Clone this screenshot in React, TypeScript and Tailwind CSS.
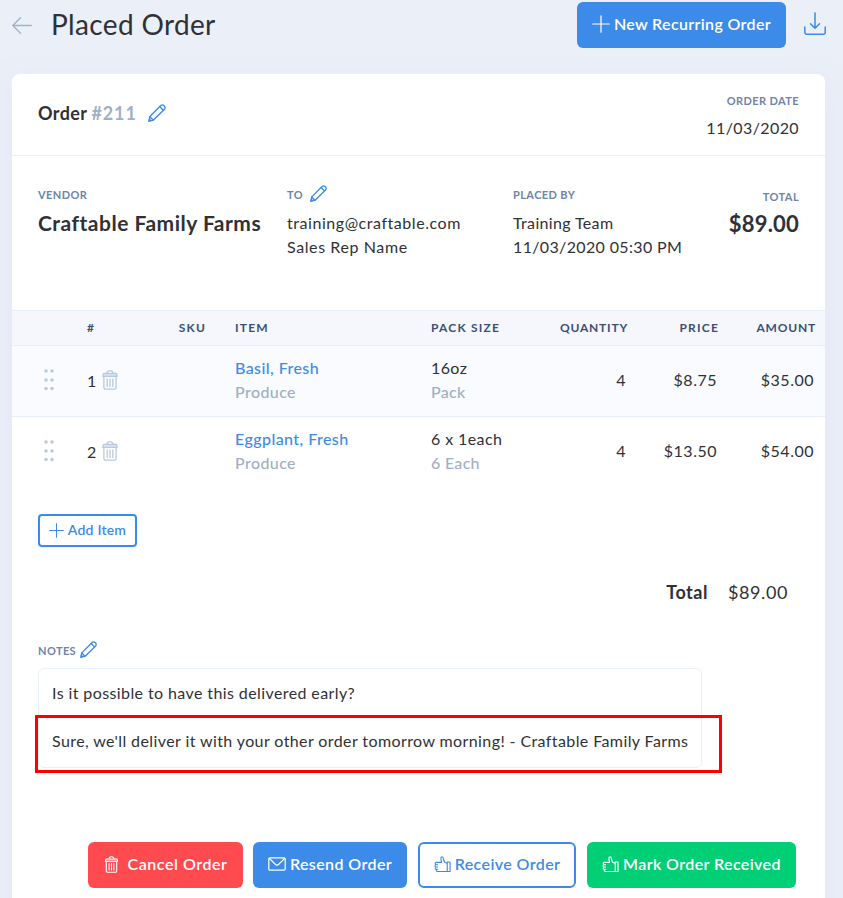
import type { ReactNode } from 'react';

type IconProps = { className?: string };

function PencilIcon({ className }: IconProps) {
  return (
    <svg viewBox="0 0 18 18" fill="none" stroke="currentColor" strokeWidth="1.4" strokeLinecap="round" strokeLinejoin="round" className={className}>
      <path d="M5.4 16.1.8 17.2l1.1-4.6L12.8 1.5a2.1 2.1 0 0 1 3 0l.7.7a2.1 2.1 0 0 1 0 3z" />
      <path d="m11.8 2.7 3.5 3.5M1.900 12.800l3.300 3.300M1.500 15.400l1.100 1.100" />
    </svg>
  );
}

function TrashIcon({ className }: IconProps) {
  return (
    <svg viewBox="0 0 16 20" fill="none" stroke="currentColor" strokeWidth="1.3" strokeLinecap="round" strokeLinejoin="round" className={className}>
      <path d="M1.9 6.4h12.2v11.2a1.6 1.6 0 0 1-1.6 1.6h-9a1.6 1.6 0 0 1-1.6-1.6z" />
      <path d="M1.5 3.5h13l.7 2.9H.8z" fill="currentColor" fillOpacity=".35" />
      <path d="M4.900 3.400c.3-1.600 1.100-2.500 2.300-2.500h1.600c1.200 0 2 .9 2.300 2.500M5.200 8.900v7.600M8 8.900v7.600M10.800 8.900v7.600" />
    </svg>
  );
}

function PlusIcon({ className }: IconProps) {
  return (
    <svg viewBox="0 0 18 18" fill="none" stroke="currentColor" strokeWidth="1.2" strokeLinecap="round" className={className}>
      <path d="M9 .75v16.5M.75 9h16.5" />
    </svg>
  );
}

function MailIcon({ className }: IconProps) {
  return (
    <svg viewBox="0 0 18 14" fill="none" stroke="currentColor" strokeWidth="1.2" strokeLinejoin="round" className={className}>
      <rect x=".8" y=".8" width="16.4" height="12.4" rx="1.2" />
      <path d="m1.2 1.3 6.3 6.2a2.1 2.1 0 0 0 3 0l6.3-6.2" />
    </svg>
  );
}

function ThumbIcon({ className }: IconProps) {
  return (
    <svg viewBox="0 0 18 18" fill="none" stroke="currentColor" strokeWidth="1.2" strokeLinecap="round" strokeLinejoin="round" className={className}>
      <path d="M14 8.200c-2.200-.4-3.600-2.100-3.900-4.100-.2-1.500-.5-2.800-1.500-2.800-1 0-1.400 1-1.200 2.200l.5 3.800H2.500a1.200 1.200 0 0 0 0 2.500h1.300M2.300 9.800a1.200 1.200 0 0 0 0 2.400h1.500M2.500 12.200a1.200 1.200 0 0 0 0 2.400h1.300M3.200 14.600a1.200 1.200 0 0 0 .2 2.300H14" />
      <path d="M14 6.900h3v10h-3z" />
    </svg>
  );
}

function DragIcon() {
  return (
    <svg viewBox="0 0 10 22" className="h-[22px] w-2.5 text-[#b9c9dd]" fill="currentColor">
      {[2, 11, 19.5].map((y) => (
        <g key={y}>
          <circle cx="2" cy={y} r="1.7" />
          <circle cx="8" cy={y} r="1.7" />
        </g>
      ))}
    </svg>
  );
}

const items = [
  { id: 1, name: 'Basil, Fresh', category: 'Produce', pack: '16oz', unit: 'Pack', quantity: 4, price: '$8.75', amount: '$35.00', row: 'h-[71px] bg-[#f9fbfe] border-b border-[#e7eef6]' },
  { id: 2, name: 'Eggplant, Fresh', category: 'Produce', pack: '6 x 1each', unit: '6 Each', quantity: 4, price: '$13.50', amount: '$54.00', row: 'h-[70px]' },
];

const columns = 'grid grid-cols-[75px_60px_88px_196px_109px_88px_91px_97px] items-center';

function Label({ children, className = '' }: { children: ReactNode; className?: string }) {
  return <div className={`text-[11px] leading-4 font-bold tracking-[0.4px] whitespace-nowrap text-[#6e84a8] uppercase ${className}`}>{children}</div>;
}

export default function App() {
  return (
    <div className="h-[898px] w-full overflow-hidden bg-[#ebeff8] font-['Lato','Liberation_Sans',sans-serif] text-base leading-6 tracking-[0.5px] text-[#2f3136]">
      <header className="flex h-[74px] items-start pt-0.5 pr-[17px] pl-3">
        <svg viewBox="0 0 20 17" className="mt-[15px] h-[17px] w-5 text-[#9fb3c8]" fill="none" stroke="currentColor" strokeWidth="1.3" strokeLinecap="round" strokeLinejoin="round">
          <path d="M19.3 8.5H.8M8.5.8.8 8.5l7.7 7.7" />
        </svg>
        <h1 className="ml-[19px] text-[28px] leading-[44px] tracking-[0.35px] whitespace-nowrap">Placed Order</h1>
        <button className="ml-auto flex h-[46px] w-[209px] items-center justify-center gap-1 rounded-md bg-[#3d8be8] font-semibold tracking-[0.35px] whitespace-nowrap text-white">
          <PlusIcon className="mb-0.5 h-[18px] w-[18px] shrink-0" />
          <span className="pb-0.5">New Recurring Order</span>
        </button>
        <button className="mt-2.5 ml-[18px] text-[#3d8be8]">
          <svg viewBox="0 0 22 23" className="h-[23px] w-[22px]" fill="none" stroke="currentColor" strokeWidth="1.5" strokeLinecap="round" strokeLinejoin="round">
            <path d="M11 1v15M6.5 11.7 11 16.2l4.5-4.5M.8 15v5.2a2 2 0 0 0 2 2h16.4a2 2 0 0 0 2-2V15" />
          </svg>
        </button>
      </header>

      <main className="mr-[18px] ml-3 h-[860px] rounded-lg bg-white shadow-[0_12px_24px_rgba(225,220,250,0.5)]">
        <div className="flex h-[82px] justify-between border-b border-[#e7eef6] px-[26px]">
          <div className="flex h-[78px] items-center text-lg font-bold tracking-[0.4px]">
            Order <span className="ml-1 tracking-[0.9px] text-[#9fb0c5]">#211</span>
            <PencilIcon className="ml-[11px] h-[18px] w-[18px] text-[#3d8be8]" />
          </div>
          <div className="pt-[19px] text-right">
            <Label>Order Date</Label>
            <div className="mt-[7px] tracking-[0.4px]">11/03/2020</div>
          </div>
        </div>

        <div className="flex h-[154px] px-[26px] pt-[31px] whitespace-nowrap">
          <div className="w-[249px]">
            <Label>Vendor</Label>
            <div className="mt-[7px] text-[21px] leading-[26px] font-bold tracking-[0.5px]">Craftable Family Farms</div>
          </div>
          <div className="w-[226px]">
            <div className="flex h-4 items-center">
              <Label>To</Label>
              <PencilIcon className="mb-1 ml-[7px] h-[17px] w-[17px] text-[#3d8be8]" />
            </div>
            <div className="mt-2 tracking-[0.55px]">training@craftable.com</div>
            <div className="tracking-[0.6px]">Sales Rep Name</div>
          </div>
          <div className="tracking-[0.35px]">
            <Label>Placed By</Label>
            <div className="mt-2">Training Team</div>
            <div>11/03/2020 05:30 PM</div>
          </div>
          <div className="ml-auto text-right">
            <Label className="pt-0.5">Total</Label>
            <div className="mt-1.5 text-[22px] leading-[26px] font-bold tracking-[0.2px]">$89.00</div>
          </div>
        </div>

        <div className={`${columns} h-9 border-y border-[#e7eef6] bg-[#f5f7fc] text-xs font-bold tracking-[1.2px] text-[#3c5077]`}>
          <div />
          <div>#</div>
          <div className="pr-[29px] text-right">SKU</div>
          <div>ITEM</div>
          <div>PACK SIZE</div>
          <div className="text-right tracking-[0.8px]">QUANTITY</div>
          <div className="text-right">PRICE</div>
          <div className="text-right tracking-[0.8px]">AMOUNT</div>
        </div>

        {items.map((item) => (
          <div key={item.id} className={`${columns} ${item.row}`}>
            <div className="pb-0.5 pl-8">
              <DragIcon />
            </div>
            <div className="flex items-center gap-[5px]">
              <span className="pb-px">{item.id}</span>
              <TrashIcon className="mb-0.5 h-5 w-4 text-[#b9c9dd]" />
            </div>
            <div />
            <div className="pb-[3px]">
              <div className="font-medium tracking-[0.43px] text-[#3d8be8]">{item.name}</div>
              <div className="font-medium tracking-[0.4px] text-[#9fb0c5]">{item.category}</div>
            </div>
            <div className="pb-[3px]">
              <div className="tracking-[0.4px]">{item.pack}</div>
              <div className="font-medium tracking-[0.3px] text-[#9fb0c5]">{item.unit}</div>
            </div>
            <div className="pr-0.5 pb-0.5 text-right">{item.quantity}</div>
            <div className="pr-0.5 pb-0.5 text-right">{item.price}</div>
            <div className="pr-0.5 pb-0.5 text-right">{item.amount}</div>
          </div>
        ))}

        <div className="px-[26px] pt-[27px]">
          <button className="flex h-[33px] w-[99px] items-center justify-center gap-1 rounded border-2 border-[#3d8be8] text-sm font-semibold tracking-[0.2px] whitespace-nowrap text-[#3d8be8]">
            <PlusIcon className="h-[15px] w-[15px] shrink-0" />
            <span className="pb-px">Add Item</span>
          </button>
        </div>

        <div className="mt-[33px] flex justify-end gap-5 pr-[37px] text-lg leading-6">
          <span className="font-bold">Total</span>
          <span className="tracking-[0.6px]">$89.00</span>
        </div>

        <div className="mt-[39px] flex h-4 items-center pl-[26px]">
          <Label>Notes</Label>
          <PencilIcon className="mb-1 ml-1 h-[17px] w-[17px] text-[#3d8be8]" />
        </div>

        <div className="relative mt-[9px] ml-[26px] h-[100px] w-[664px] rounded-md border border-[#e9eff7] px-[13px] py-3 tracking-[0.4px] whitespace-nowrap">
          <p>Is it possible to have this delivered early?</p>
          <p className="mt-6">Sure, we'll deliver it with your other order tomorrow morning! - Craftable Family Farms</p>
          <div className="absolute top-[46px] -left-1 h-[58px] w-[687px] border-3 border-[#fb0000]" />
        </div>

        <div className="mt-[74px] flex h-[46px] pl-[76px] font-semibold tracking-[0.4px] whitespace-nowrap">
          <button className="flex w-[155px] items-center justify-center gap-2 rounded-md bg-[#ff4b4f] text-white">
            <TrashIcon className="mb-0.5 h-[17px] w-[15px] shrink-0" />
            <span className="pb-0.5 pl-px tracking-[0.55px]">Cancel Order</span>
          </button>
          <button className="ml-2.5 flex w-[154px] items-center justify-center gap-1 rounded-md bg-[#3d8be8] text-white">
            <MailIcon className="mb-0.5 h-3.5 w-[18px] shrink-0" />
            <span className="pb-0.5">Resend Order</span>
          </button>
          <button className="ml-[11px] flex w-[158px] items-center justify-center gap-1 rounded-md border-2 border-[#3d8be8] text-[#3d8be8]">
            <ThumbIcon className="mb-0.5 h-[18px] w-[17px] shrink-0" />
            <span className="pb-0.5">Receive Order</span>
          </button>
          <button className="ml-[11px] flex w-[209px] items-center justify-center gap-1 rounded-md bg-[#00cf76] text-white">
            <ThumbIcon className="mb-0.5 h-[18px] w-[17px] shrink-0" />
            <span className="pb-0.5">Mark Order Received</span>
          </button>
        </div>
      </main>
    </div>
  );
}
